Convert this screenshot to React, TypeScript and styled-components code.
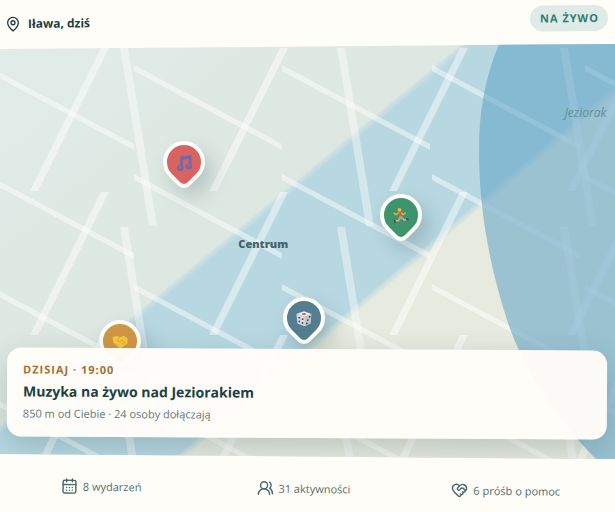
import React from "react";
import styled, { createGlobalStyle } from "styled-components";
import { CalendarDays, HeartHandshake, MapPin, UsersRound } from "lucide-react";

const GlobalStyle = createGlobalStyle`
  * { box-sizing: border-box; }
  body {
    margin: 0;
    background: #fffdf8;
    color: #203f42;
    font-family: "Open Sans", "Noto Sans", sans-serif;
    overflow-x: hidden;
  }
  p, h2, ul { margin: 0; padding: 0; }
`;

const Page = styled.main`
  display: flex;
  flex-direction: column;
  min-height: 100vh;
  background: #fffdf8;
  overflow: hidden;
`;

const Header = styled.header`
  display: flex;
  align-items: center;
  justify-content: space-between;
  height: 44px;
  padding: 0 7px 3px 5px;
  transform: rotate(-0.6deg);
`;

const Place = styled.div`
  display: flex;
  align-items: center;
  gap: 7px;
  font-size: 12px;
  font-weight: 700;
`;

const Badge = styled.span`
  padding: 5px 9px 5px 10px;
  border-radius: 14px;
  background: #deebe8;
  color: #2f7c70;
  font-size: 11px;
  line-height: 16px;
  font-weight: 700;
  letter-spacing: 1px;
`;

const MapArea = styled.section`
  position: relative;
  display: flex;
  flex: 1;
  flex-direction: column;
  justify-content: flex-end;
  min-height: 415px;
  padding: 0 8px 21px 7px;
  overflow: hidden;
  clip-path: polygon(0 5px, 100% 0, 100% 100%, 0 calc(100% - 5px));
`;

const MapDrawing = styled.svg`
  position: absolute;
  inset: 0;
  width: 100%;
  height: 100%;
`;

const MapLabel = styled.span<{ $x: number; $y: number; $water?: boolean }>`
  position: absolute;
  left: ${(p) => p.$x}%;
  top: ${(p) => p.$y}%;
  transform: translate(-50%, -50%);
  font-size: ${(p) => (p.$water ? 12 : 11)}px;
  font-style: ${(p) => (p.$water ? "italic" : "normal")};
  font-weight: ${(p) => (p.$water ? 400 : 800)};
  color: ${(p) => (p.$water ? "#628f9b" : "#456468")};
`;

const Pin = styled.button<{ $x: number; $y: number; $color: string }>`
  position: absolute;
  left: ${(p) => p.$x}%;
  top: ${(p) => p.$y}%;
  display: grid;
  place-items: center;
  width: 42px;
  height: 42px;
  margin: -21px 0 0 -21px;
  padding: 0;
  border: 4px solid #fffdf8;
  border-radius: 50% 50% 9px 50%;
  background: ${(p) => p.$color};
  box-shadow: 12px 2px 20px rgba(31, 65, 67, 0.22);
  transform: rotate(45deg);

  svg {
    width: 17px;
    height: 17px;
    transform: rotate(-45deg);
  }
`;

const EventCard = styled.article`
  position: relative;
  padding: 14px 16px;
  border-radius: 14px;
  background: rgba(255, 253, 249, 0.97);
  box-shadow: 0 10px 30px rgba(31, 65, 67, 0.22);
  transform: rotate(0.3deg);
`;

const EventTime = styled.p`
  color: #a96e35;
  font-size: 11px;
  line-height: 16px;
  font-weight: 700;
  letter-spacing: 1px;
`;

const EventTitle = styled.h2`
  margin: 4px 0 3px;
  font-size: 14px;
  line-height: 20px;
  font-weight: 700;
`;

const EventMeta = styled.p`
  color: #637879;
  font-size: 11px;
  line-height: 18px;
`;

const Stats = styled.ul`
  display: grid;
  grid-template-columns: repeat(3, 1fr);
  align-items: center;
  height: 53px;
  padding: 6px 8px 0 0;
  list-style: none;
  transform: rotate(0.6deg);
`;

const Stat = styled.li`
  display: flex;
  align-items: center;
  justify-content: center;
  gap: 5px;
  color: #536c6e;
  font-size: 11px;
  white-space: nowrap;

  svg { color: #49686a; }
`;

const diagonal = [-14, 134, 282, 432, 585].flatMap((x) =>
  [68, 177, 287, 397].map((y) => `M${x} ${y - 3}l148 79v6l-148 -79z`)
);
const steep = [104, 283, 463, 641].flatMap((x) =>
  [48, 192, 335].map((y) => `M${x - 3} ${y}h8l-71 143h-8z`)
);
const upright = [124, 341, 564].flatMap((x) =>
  [48, 227, 405].map((y) => `M${x - 4} ${y}h8l29 178h-8z`)
);

const CityMap = () => (
  <MapDrawing viewBox="0 44 615 415" preserveAspectRatio="xMidYMid slice" aria-hidden="true">
    <defs>
      <linearGradient id="land" x1="0" y1="44" x2="300" y2="400" gradientUnits="userSpaceOnUse">
        <stop offset="0" stopColor="#e1ebe8" />
        <stop offset="1" stopColor="#dce6de" />
      </linearGradient>
      <filter id="soft" x="-10%" y="-10%" width="120%" height="120%">
        <feGaussianBlur stdDeviation="1" />
      </filter>
    </defs>
    <rect y="44" width="615" height="415" fill="url(#land)" />
    <g filter="url(#soft)">
      <path d="M510 5L-60 476V560H740V-20H543Z" fill="#c8dee3" />
      <path d="M514 7L-56 478V560H740V-20H543Z" fill="#b7d8e1" />
      <path d="M735 -13L173 460L80 538H760V-33Z" fill="#d0e2e0" />
      <path d="M739 -11L177 462L84 540H760V-33Z" fill="#e7eadf" />
    </g>
    <g fill="#ffffff" fillOpacity="0.46">
      <path d={diagonal.join("")} />
      <path d={steep.join("")} />
      <path d={upright.join("")} fillOpacity="0.4" />
    </g>
    <path
      d="M501 40C485 75 479 112 479 150C479 205 488 262 508 323C525 371 552 415 599 462H640V40Z"
      fill="#519cc6"
      fillOpacity="0.5"
    />
    <path
      d="M501 40C485 75 479 112 479 150C479 205 488 262 508 323C525 371 552 415 599 462H640V40Z"
      fill="#93bfd3"
      fillOpacity="0.15"
    />
  </MapDrawing>
);

const Notes = () => (
  <svg viewBox="0 0 18 18" aria-hidden="true">
    <path d="M5 2.5L17 1v12h-3V5L8 6v8H5z" fill="#7667a5" />
    <ellipse cx="5" cy="14.5" rx="3.6" ry="3" fill="#7667a5" />
    <ellipse cx="14" cy="13" rx="3.5" ry="3" fill="#7667a5" />
    <path d="M4 13.5l2-.5M13 12l2-.5" stroke="#9484b5" />
  </svg>
);

const Runner = () => (
  <svg viewBox="0 0 17 17" fill="none" strokeLinecap="round" strokeLinejoin="round" aria-hidden="true">
    <path d="M6 5.6L3.5 7.4 1.5 6M8.6 5.4l1.8 2 2.2-1.4" stroke="#f4ae3c" strokeWidth="1.5" />
    <path d="M7.5 11.4L6 13.2 2.8 13.8M10 11l1.6 1.8 2.4-.4" stroke="#eeb450" strokeWidth="1.5" />
    <path d="M6.2 4.8h2.6l.4 4.4-2.6.4z" fill="#df5950" />
    <path d="M6.6 9l2.8-.2 1.6 2.4-1.6 1.2-1.4-1-1 .8-1.2-.8z" fill="#a3a19b" />
    <circle cx="7" cy="2.6" r="1.9" fill="#f6b93e" />
    <path d="M2.2 13.4l.3 1.6M14.2 11.8l1.2.6" stroke="#354f67" strokeWidth="1.7" />
  </svg>
);

const Dice = () => (
  <svg viewBox="0 0 18 18" aria-hidden="true">
    <path d="M1 4l8-3 8 3-7 3z" fill="#f2eff0" />
    <path d="M1 4l9 3v10l-8-3z" fill="#dcdcdf" />
    <path d="M10 7l7-3-1 10-6 3z" fill="#c3c5ca" />
    <ellipse cx="9" cy="4" rx="2.2" ry="1" fill="#d84d43" />
    <g fill="#454775">
      <circle cx="4" cy="8" r="1" /><circle cx="7.5" cy="13.5" r="1" />
      <circle cx="4" cy="12" r="1" /><circle cx="7.5" cy="9.5" r="1" />
      <circle cx="15" cy="7" r="1" /><circle cx="13" cy="10.5" r="1" />
      <circle cx="12" cy="14" r="1" />
    </g>
  </svg>
);

const Handshake = () => (
  <svg viewBox="0 0 18 18" aria-hidden="true">
    <path d="M1 4l5-1 3 1 4-1 4 2v6l-7 5-3-1-5-5z" fill="#f9c83c" />
    <path d="M9 4L6 8l2 1 3-2 4 4M4 11l3 3M11 10l2 2" fill="none" stroke="#dda32d" />
  </svg>
);

const pins = [
  { label: "Muzyka", x: 29.9, y: 28.5, color: "#d86462", icon: <Notes /> },
  { label: "Sport", x: 65.2, y: 41.3, color: "#3e946c", icon: <Runner /> },
  { label: "Gry", x: 49.5, y: 66, color: "#547e90", icon: <Dice /> },
  { label: "Pomoc", x: 19.5, y: 71.6, color: "#cf9745", icon: <Handshake /> },
];

export default function App() {
  return (
    <>
      <GlobalStyle />
      <Page>
        <Header>
          <Place>
            <MapPin size={16} strokeWidth={2} />
            Iława, dziś
          </Place>
          <Badge>NA ŻYWO</Badge>
        </Header>
        <MapArea>
          <CityMap />
          <MapLabel $x={42.8} $y={48}>Centrum</MapLabel>
          <MapLabel $x={95.2} $y={16.5} $water>Jeziorak</MapLabel>
          {pins.map((pin) => (
            <Pin key={pin.label} type="button" aria-label={pin.label} $x={pin.x} $y={pin.y} $color={pin.color}>
              {pin.icon}
            </Pin>
          ))}
          <EventCard>
            <EventTime>DZISIAJ · 19:00</EventTime>
            <EventTitle>Muzyka na żywo nad Jeziorakiem</EventTitle>
            <EventMeta>850 m od Ciebie · 24 osoby dołączają</EventMeta>
          </EventCard>
        </MapArea>
        <Stats>
          <Stat><CalendarDays size={17} />8 wydarzeń</Stat>
          <Stat><UsersRound size={17} />31 aktywności</Stat>
          <Stat><HeartHandshake size={17} />6 próśb o pomoc</Stat>
        </Stats>
      </Page>
    </>
  );
}
